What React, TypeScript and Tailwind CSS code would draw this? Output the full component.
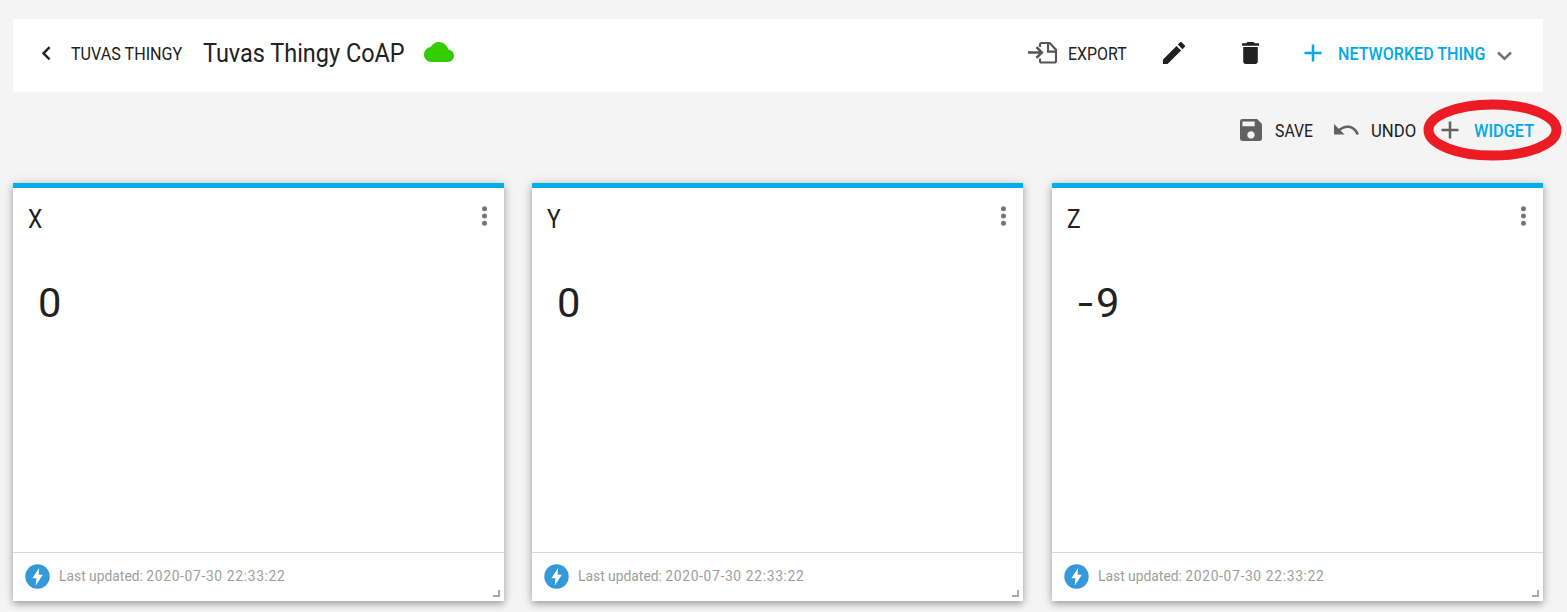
import React from 'react';

type LabelProps = { box: string; text: string; children: React.ReactNode };

// A label with a fixed slot, drawn in slightly condensed letters.
function Label({ box, text, children }: LabelProps) {
  return (
    <span className={`block shrink-0 whitespace-nowrap ${box}`}>
      <span className={`inline-block origin-left ${text}`}>{children}</span>
    </span>
  );
}

function Plus({ className }: { className: string }) {
  return (
    <svg className={`h-[18px] w-[18px] shrink-0 ${className}`} viewBox="0 0 18 18" fill="none" stroke="currentColor" strokeWidth="2.5">
      <path d="M9 .5v17M.5 9h17" />
    </svg>
  );
}

function Header() {
  return (
    <header className="flex h-[73px] items-center bg-white pb-[3px]">
      <svg className="ml-[28px] mt-[-1px] h-[15px] w-[10px] shrink-0" viewBox="0 0 10 15" fill="none" stroke="#212121" strokeWidth="2.4">
        <path d="M8.6 1.2 2.5 7.3l6.1 6.1" />
      </svg>
      <Label box="ml-[20px] w-[112px] text-[17.8px]" text="scale-x-[0.907]">TUVAS THINGY</Label>
      <Label box="ml-[20px] w-[202px] text-[25px]" text="scale-x-[0.938]">Tuvas Thingy CoAP</Label>
      <svg className="mb-[4px] ml-[19px] h-[20px] w-[30px] shrink-0" viewBox="0 0 24 16" preserveAspectRatio="none">
        <path fill="#33cc00" d="M19.35 6.04A7.49 7.49 0 0 0 12 0C9.11 0 6.6 1.64 5.35 4.04A5.994 5.994 0 0 0 0 10c0 3.31 2.69 6 6 6h13c2.76 0 5-2.24 5-5 0-2.64-2.05-4.78-4.65-4.96z" />
      </svg>
      <div className="ml-auto flex items-center pr-[31px]">
        <svg className="mb-[3px] ml-[-1px] mr-[1px] h-[23px] w-[30px] shrink-0" viewBox="0 0 30 23" fill="none" stroke="#555" strokeWidth="2.1">
          <path d="M0 11.5h13" strokeWidth="2.5" />
          <path d="m8.5 6.2 5.3 5.3-5.3 5.3" strokeWidth="2.5" />
          <path d="M12 6V3.5Q12 2 13.5 2h8.2l6.3 6.7V20q0 1.5-1.5 1.5h-13Q12 21.5 12 20v-2.500M20 2v8.600h8" />
        </svg>
        <Label box="ml-[9px] w-[60px] text-[17.8px]" text="scale-x-[0.895]">EXPORT</Label>
        <svg className="mb-[2px] ml-[35px] mr-[1px] h-[22px] w-[22px] shrink-0" viewBox="3 3 18 18" fill="#212121">
          <path d="M3 17.25V21h3.75L17.81 9.94l-3.75-3.75L3 17.25zM20.71 7.04a.996.996 0 0 0 0-1.41l-2.34-2.34a.996.996 0 0 0-1.41 0l-1.83 1.83 3.75 3.75 1.83-1.83z" />
        </svg>
        <svg className="mb-[2px] ml-[56px] mr-[1px] h-[22px] w-[17px] shrink-0" viewBox="5 3 14 18" preserveAspectRatio="none" fill="#212121">
          <path d="M6 19c0 1.1.9 2 2 2h8c1.1 0 2-.9 2-2V7H6v12zM19 4h-3.5l-1-1h-5l-1 1H5v2h14V4z" />
        </svg>
        <Plus className="mb-[2px] ml-[44px] mr-px text-[#00a9e8]" />
        <Label box="ml-[15px] w-[148px] text-[17.8px] font-medium text-[#00a9e8]" text="scale-x-[0.904]">NETWORKED THING</Label>
        <svg className="ml-[11px] mt-[4px] h-[10px] w-[15px] shrink-0" viewBox="0 0 15 10" fill="none" stroke="#757575" strokeWidth="2.6">
          <path d="m1 1.5 6.5 6.2L14 1.5" />
        </svg>
      </div>
    </header>
  );
}

function Toolbar() {
  return (
    <div className="flex h-[91px] items-start justify-end pt-[19px]">
      <div className="relative flex h-[40px] items-center pr-[8px]">
        <svg className="mb-[2px] h-[22px] w-[22px] shrink-0" viewBox="3 3 18 18" fill="#616161">
          <path d="M17 3H5a2 2 0 0 0-2 2v14c0 1.1.9 2 2 2h14c1.1 0 2-.9 2-2V7l-4-4zm-5 16c-1.66 0-3-1.34-3-3s1.34-3 3-3 3 1.34 3 3-1.34 3-3 3zm3-10H5V5h10v4z" />
        </svg>
        <Label box="ml-[13px] w-[39px] text-[17.8px]" text="scale-x-[0.89]">SAVE</Label>
        <svg className="mb-[2px] ml-[20px] h-[12px] w-[25px] shrink-0" viewBox="0 0 25 12" fill="none">
          <path d="M0 0v10.5h10.5z" fill="#616161" />
          <path d="M4 7.2C11 .3 20 1.3 23.8 10.6" stroke="#616161" strokeWidth="2.6" />
        </svg>
        <Label box="ml-[12px] w-[46px] text-[17.8px]" text="scale-x-[0.94]">UNDO</Label>
        <Plus className="mb-[2px] ml-[24px] text-[#616161]" />
        <Label box="ml-[15px] w-[61px] text-[17.8px] font-medium text-[#00a9e8]" text="scale-x-[0.92]">WIDGET</Label>
        <svg className="pointer-events-none absolute right-[-19px] top-[-12px] h-[62px] w-[139px]" viewBox="0 0 139 62" fill="none">
          <ellipse cx="69.5" cy="31" rx="64" ry="25.5" stroke="#ed1c24" strokeWidth="10" />
        </svg>
      </div>
    </div>
  );
}

function Card({ title, value }: { title: string; value: number }) {
  return (
    <section className="flex h-[418px] flex-col border-t-[5px] border-[#00aeea] bg-white shadow-[0_3px_7px_rgba(0,0,0,0.3),0_0_12px_rgba(0,0,0,0.1)]">
      <div className="flex h-[63px] items-center justify-between pl-[15px] pr-[17px]">
        <Label box="text-[25px]" text="scale-x-[0.91]">{title}</Label>
        <svg className="mb-[7px] h-[20px] w-[5px]" viewBox="0 0 5 20" fill="#757575">
          <circle cx="2.5" cy="2.7" r="2.5" />
          <circle cx="2.5" cy="10" r="2.5" />
          <circle cx="2.5" cy="17.3" r="2.5" />
        </svg>
      </div>
      <div className="flex flex-1 pl-[25px] pt-[23px] text-[40px] leading-[60px]">
        {value < 0 && <span className="ml-px inline-block w-[18px] origin-left scale-x-[1.35]">-</span>}
        <span className="inline-block origin-left scale-x-[1.04]">{Math.abs(value)}</span>
      </div>
      <footer className="flex h-[49px] items-center border-t border-[#d8d8d8] pl-[12px]">
        <svg className="mb-[2px] h-[25px] w-[25px] shrink-0" viewBox="0 0 25 25">
          <circle cx="12.5" cy="12.5" r="12.2" fill="#3498db" />
          <path d="M14 4 7.4 14.2h4L10.8 21.5l7-10.8h-4.1z" fill="#fff" />
        </svg>
        <Label box="ml-[9px] text-[15.4px] text-[#9e9e9e]" text="scale-x-[0.9]">
          Last updated: <span className="tracking-[0.72px]">2020-07-30 22:33:22</span>
        </Label>
        <span className="mb-[4px] ml-auto mr-[4px] h-[7px] w-[7px] self-end border-b-2 border-r-2 border-[#aaa]" />
      </footer>
    </section>
  );
}

export default function App() {
  return (
    <main className="h-[612px] overflow-hidden bg-[#f4f4f4] pl-[13px] pr-[24px] pt-[19px] font-['Roboto','Liberation_Sans',sans-serif] text-[#212121]">
      <Header />
      <Toolbar />
      <div className="grid grid-cols-[repeat(3,491px)] gap-[28.4px]">
        <Card title="X" value={0} />
        <Card title="Y" value={0} />
        <Card title="Z" value={-9} />
      </div>
    </main>
  );
}
